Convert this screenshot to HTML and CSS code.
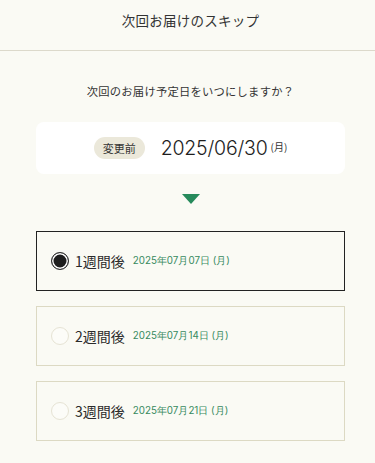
FILE: index.html
```html
<!DOCTYPE html>
<html lang="ja">
<head>
<meta charset="utf-8">
<link rel="stylesheet" href="styles.css">
</head>
<body>
<header class="header"><h1 class="title">次回お届けのスキップ</h1></header>
<main class="main">
  <p class="lead">次回のお届け予定日をいつにしますか？</p>
  <div class="current">
    <span class="badge">変更前</span>
    <span class="cur-date">2025/06/30</span><span class="cur-dow">(月)</span>
  </div>
  <div class="arrow"></div>
  <ul class="options">
    <li class="option selected">
      <span class="radio"></span>
      <span class="label">1週間後</span>
      <span class="date">2025年07月07日 (月)</span>
    </li>
    <li class="option">
      <span class="radio"></span>
      <span class="label">2週間後</span>
      <span class="date">2025年07月14日 (月)</span>
    </li>
    <li class="option">
      <span class="radio"></span>
      <span class="label">3週間後</span>
      <span class="date">2025年07月21日 (月)</span>
    </li>
  </ul>
</main>
</body>
</html>
```
FILE: styles.css
```css
* { box-sizing: border-box; }
html, body { margin: 0; padding: 0; }
body {
  background: #fafaf4;
  color: #222;
  font-family: "Noto Sans CJK JP", "Noto Sans", sans-serif;
  width: 375px;
}
.header {
  height: 51px;
  border-bottom: 1px solid #dcd9cb;
  padding-left: 6px;
}
.title {
  margin: 0;
  font-size: 13.5px;
  font-weight: 400;
  line-height: 40px;
  text-align: center;
  letter-spacing: 0.02em;
  color: #333;
}
.main {
  padding: 0 30px 0 36px;
}
.lead {
  margin: 30px 0 0;
  font-size: 11.3px;
  line-height: 20px;
  text-align: center;
  letter-spacing: 0.02em;
  color: #333;
}
.current {
  margin-top: 21px;
  height: 52px;
  background: #fff;
  border-radius: 8px;
  display: flex;
  align-items: center;
  justify-content: center;
}
.badge {
  display: inline-flex;
  align-items: center;
  justify-content: center;
  height: 22px;
  padding: 0 9px;
  border-radius: 11px;
  background: #ebe8da;
  font-size: 11px;
  color: #333;
  margin-right: 16px;
}
.cur-date {
  font-family: Inter, "Noto Sans", sans-serif;
  font-size: 19.5px;
  font-weight: 300;
  letter-spacing: -0.01em;
  color: #1e1e1e;
}
.cur-dow {
  font-size: 10px;
  margin-left: 3px;
  color: #333;
  position: relative;
  top: -2px;
}
.arrow {
  width: 0;
  height: 0;
  margin: 20px auto 0;
  border-left: 9px solid transparent;
  border-right: 9px solid transparent;
  border-top: 10px solid #268a5b;
}
.options {
  list-style: none;
  margin: 27px 0 0;
  padding: 0;
  display: flex;
  flex-direction: column;
  gap: 15px;
}
.option {
  height: 60px;
  border: 1px solid #dcd9c3;
  display: flex;
  align-items: center;
  padding-left: 14px;
}
.option.selected { border-color: #222; }
.radio {
  width: 18px;
  height: 18px;
  border-radius: 50%;
  border: 1px solid #e6e3d4;
  background: #fcfcf8;
  flex: none;
}
.selected .radio {
  border: 1.5px solid #333;
  background: #1e1e1e;
  box-shadow: inset 0 0 0 1.5px #fff;
}
.label {
  margin-left: 6px;
  font-size: 14px;
  font-weight: 400;
  color: #2a2a2a;
}
.date {
  margin-left: 8px;
  font-family: Inter, "Noto Sans", sans-serif;
  font-size: 9.8px;
  color: #378a5f;
}
```
